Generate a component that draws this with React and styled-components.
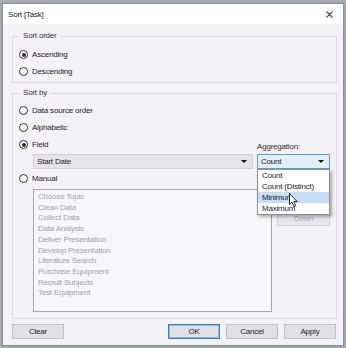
import React from 'react';
import styled, { createGlobalStyle } from 'styled-components';

const GlobalStyle = createGlobalStyle`
  * { box-sizing: border-box; }
  html, body {
    margin: 0;
    padding: 0;
    background: #a9afb6;
  }
  body {
    font-family: "Liberation Sans", Arial, sans-serif;
    font-size: 8px;
    letter-spacing: -0.2px;
    color: #1e1e1e;
  }
`;

const tasks = [
  'Choose Topic',
  'Clean Data',
  'Collect Data',
  'Data Analysis',
  'Deliver Presentation',
  'Develop Presentation',
  'Literature Search',
  'Purchase Equipment',
  'Recruit Subjects',
  'Test Equipment',
];

const aggregations = ['Count', 'Count (Distinct)', 'Minimum', 'Maximum'];

const App = () => {
  return (
    <Page>
      <GlobalStyle />
      <Dialog>
        <TitleBar>
          <span>Sort [Task]</span>
          <CloseIcon width="7" height="7" viewBox="0 0 7 7">
            <path d="M0.5 0.5 L6.5 6.5 M6.5 0.5 L0.5 6.5" stroke="#4a4a4a" strokeWidth="1.1" />
          </CloseIcon>
        </TitleBar>
        <Body>
          <Group>
            <Legend>Sort order</Legend>
            <RadioRow>
              <Radio $checked />
              Ascending
            </RadioRow>
            <RadioRow>
              <Radio />
              Descending
            </RadioRow>
          </Group>

          <Group $gap>
            <Legend>Sort by</Legend>
            <RadioRow>
              <Radio />
              Data source order
            </RadioRow>
            <RadioRow>
              <Radio />
              Alphabetic
            </RadioRow>
            <FieldRow>
              <RadioRow>
                <Radio $checked />
                Field
              </RadioRow>
              <AggLabel>Aggregation:</AggLabel>
            </FieldRow>
            <SelectRow>
              <Select $width={220}>
                Start Date
                <Caret />
              </Select>
              <AggWrap>
                <Select $width={73} $active>
                  Count
                  <Caret />
                </Select>
                <Popup>
                  {aggregations.map((a) => (
                    <PopupItem key={a} $hover={a === 'Minimum'}>
                      {a}
                    </PopupItem>
                  ))}
                  <Cursor width="10" height="15" viewBox="0 0 10 15">
                    <path
                      d="M0.5 0.5 L0.5 11.5 L3 9.2 L4.8 13.6 L6.6 12.8 L4.8 8.6 L8.2 8.6 Z"
                      fill="#fff"
                      stroke="#111"
                      strokeWidth="0.9"
                      strokeLinejoin="round"
                    />
                  </Cursor>
                </Popup>
              </AggWrap>
            </SelectRow>
            <RadioRow $spaced>
              <Radio />
              Manual
            </RadioRow>
            <ListRow>
              <ListBox>
                {tasks.map((t) => (
                  <ListItem key={t}>{t}</ListItem>
                ))}
              </ListBox>
              <MoveButtons>
                <SmallButton>Up</SmallButton>
                <SmallButton>Down</SmallButton>
              </MoveButtons>
            </ListRow>
          </Group>

          <Footer>
            <Button>Clear</Button>
            <Spacer />
            <Button $primary>OK</Button>
            <Button>Cancel</Button>
            <Button>Apply</Button>
          </Footer>
        </Body>
      </Dialog>
    </Page>
  );
};

export default App;

const Page = styled.div`
  width: 346px;
  height: 348px;
  padding: 3px 2px 2px 2px;
`;

const Dialog = styled.div`
  width: 342px;
  height: 343px;
  border: 1px solid #8a9199;
  background: #f5f2f7;
  box-shadow: 0 0 2px rgba(0, 0, 0, 0.25);
  display: flex;
  flex-direction: column;
`;

const TitleBar = styled.div`
  height: 20px;
  flex: 0 0 auto;
  display: flex;
  align-items: center;
  justify-content: space-between;
  padding: 0 10px 0 5px;
  background: #ffffff;
  font-size: 8px;
  color: #222;
`;

const CloseIcon = styled.svg`
  display: block;
`;

const Body = styled.div`
  flex: 1;
  display: flex;
  flex-direction: column;
  padding: 6px 6px 0 9px;
`;

const Group = styled.fieldset`
  margin: ${(p) => (p.$gap ? '4px' : '0')} 0 0 0;
  padding: ${(p) => (p.$gap ? '3px 6px 6px 6px' : '4px 6px 2px 6px')};
  border: 1px solid #dcd9e0;
  min-width: 0;
`;

const Legend = styled.legend`
  padding: 0 3px;
  margin-left: 1px;
  line-height: 12px;
  font-size: 8px;
  color: #333;
`;

const RadioRow = styled.div`
  height: 17px;
  display: flex;
  align-items: center;
  gap: 4px;
  margin-top: ${(p) => (p.$spaced ? '1px' : '0')};
  color: #1e1e1e;
`;

const Radio = styled.span`
  width: 9px;
  height: 9px;
  flex: 0 0 auto;
  border: 1px solid #333;
  border-radius: 50%;
  background: #fff;
  position: relative;

  &::after {
    content: '';
    display: ${(p) => (p.$checked ? 'block' : 'none')};
    position: absolute;
    left: 1.5px;
    top: 1.5px;
    width: 4px;
    height: 4px;
    border-radius: 50%;
    background: #2a2a2a;
  }
`;

const FieldRow = styled.div`
  display: flex;
  justify-content: space-between;
  align-items: flex-end;
`;

const AggLabel = styled.div`
  width: 73px;
  padding-bottom: 2px;
  color: #333;
`;

const SelectRow = styled.div`
  display: flex;
  gap: 4px;
  margin: 1px 0 0 14px;
`;

const Select = styled.div`
  width: ${(p) => p.$width}px;
  height: 15px;
  display: flex;
  align-items: center;
  justify-content: space-between;
  padding: 0 5px 0 3px;
  background: ${(p) => (p.$active ? '#e4eefa' : '#e6e3e9')};
  border: 1px solid ${(p) => (p.$active ? '#5d9bd8' : '#d2cfd5')};
  color: #1e1e1e;
`;

const Caret = styled.span`
  width: 0;
  height: 0;
  border-left: 3px solid transparent;
  border-right: 3px solid transparent;
  border-top: 3px solid #111;
`;

const AggWrap = styled.div`
  position: relative;
`;

const Popup = styled.div`
  position: absolute;
  left: 0;
  top: 100%;
  width: 73px;
  z-index: 5;
  background: #ffffff;
  border: 1px solid #8f8f94;
  box-shadow: 2px 2px 3px rgba(0, 0, 0, 0.3);
`;

const PopupItem = styled.div`
  height: 11px;
  line-height: 11px;
  padding-left: 4px;
  white-space: nowrap;
  background: ${(p) => (p.$hover ? '#c6def5' : 'transparent')};
  color: #1e1e1e;
`;

const Cursor = styled.svg`
  position: absolute;
  left: 31px;
  top: 23px;
`;

const ListRow = styled.div`
  display: flex;
  gap: 5px;
  margin: 2px 0 0 14px;
`;

const ListBox = styled.div`
  width: 239px;
  height: 123px;
  padding: 2px 0 0 4px;
  background: #f8f6fa;
  border: 1px solid #aaa8ad;
`;

const ListItem = styled.div`
  line-height: 10.7px;
  color: #a3a3a6;
`;

const MoveButtons = styled.div`
  width: 53px;
  display: flex;
  flex-direction: column;
  gap: 4px;
  padding-top: 3px;
`;

const SmallButton = styled.div`
  height: 15px;
  display: flex;
  align-items: center;
  justify-content: center;
  background: #e9e6ec;
  border: 1px solid #d6d3d9;
  color: #b2b0b5;
`;

const Footer = styled.div`
  display: flex;
  gap: 6px;
  margin-top: 5px;
  padding-right: 1px;
`;

const Spacer = styled.div`
  flex: 1;
`;

const Button = styled.div`
  width: 52px;
  height: 15px;
  display: flex;
  align-items: center;
  justify-content: center;
  background: #e1e0e3;
  border: 1px solid ${(p) => (p.$primary ? '#3a7fbd' : '#c2c0c5')};
  box-shadow: ${(p) => (p.$primary ? 'inset 0 0 0 1px #8fbbe3' : 'none')};
  color: #1e1e1e;
`;
